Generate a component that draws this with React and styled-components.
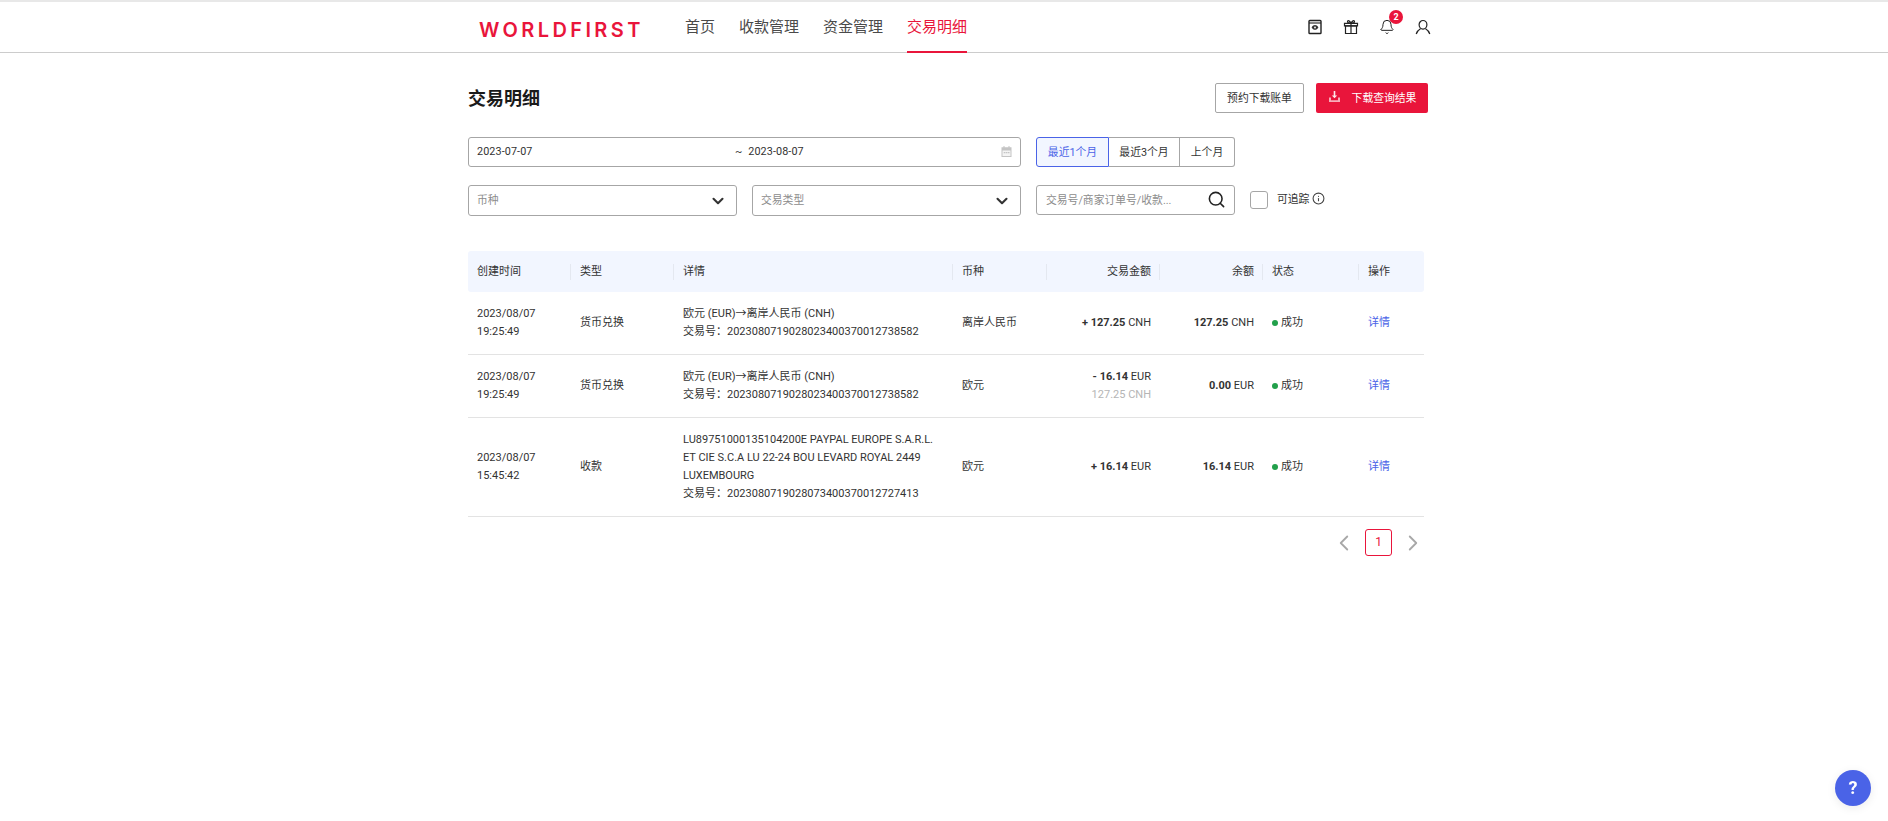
import React from "react";
import styled, { createGlobalStyle } from "styled-components";
import { ChevronDown, ChevronLeft, ChevronRight, Search, Info, Bell } from "lucide-react";

const FONT = `Roboto, "Noto Sans CJK SC", sans-serif`;

const Global = createGlobalStyle`
  html, body { margin: 0; padding: 0; background: #fff; }
  body { font-family: ${FONT}; font-size: 10.8px; color: #333; min-height: 821px; }
`;

const Header = styled.header`
  height: 50px;
  border-top: 2px solid #e8e8e8;
  border-bottom: 1px solid #ccc;
  display: flex;
  align-items: stretch;
  padding: 0 457px 0 479px;
`;
const Logo = styled.div`
  width: 163px;
  align-self: center;
  padding-top: 5px;
  font-family: Inter, "Liberation Sans", sans-serif;
  font-weight: 600;
  font-size: 20px;
  letter-spacing: 3.4px;
  color: #e9153b;
  line-height: 20px;
  white-space: nowrap;
`;
const Nav = styled.nav`
  display: flex;
  gap: 24px;
  margin-left: 43px;
`;
const NavItem = styled.a`
  font-size: 15px;
  line-height: 50px;
  color: ${(p) => (p.$active ? "#e9153b" : "#4a4a4a")};
  border-bottom: 2px solid ${(p) => (p.$active ? "#e9153b" : "transparent")};
  box-sizing: border-box;
  height: 51px;
  margin-bottom: -1px;
`;
const Tools = styled.div`
  margin-left: auto;
  display: flex;
  align-items: center;
  gap: 20px;
  color: #222;
`;
const ToolIcon = styled.span`
  position: relative;
  display: flex;
  width: 16px;
  height: 16px;
`;
const Badge = styled.span`
  position: absolute;
  top: -9px;
  left: 10px;
  width: 14px;
  height: 14px;
  border-radius: 50%;
  background: #e9153b;
  color: #fff;
  font-size: 9px;
  font-weight: 700;
  line-height: 14px;
  text-align: center;
`;

const Main = styled.main`
  padding: 0 460px 0 468px;
`;
const TitleRow = styled.div`
  display: flex;
  align-items: center;
  justify-content: space-between;
  height: 30px;
  margin-top: 30px;
`;
const Title = styled.h1`
  margin: 0 0 2px;
  font-size: 18px;
  font-weight: 700;
  color: #1a1a1a;
`;
const Actions = styled.div`
  display: flex;
  gap: 12px;
`;
const OutlineButton = styled.button`
  width: 89px;
  height: 30px;
  padding: 0 0 3px;
  font: inherit;
  color: #333;
  background: #fff;
  border: 1px solid #a6a6a6;
  border-radius: 2px;
`;
const PrimaryButton = styled.button`
  width: 112px;
  height: 30px;
  padding: 0 0 3px;
  font: inherit;
  color: #fff;
  background: #e9153b;
  border: 0;
  border-radius: 2px;
  display: flex;
  align-items: center;
  justify-content: center;
  gap: 11px;
`;
const FilterRow = styled.div`
  display: flex;
  align-items: flex-start;
  gap: 15px;
  margin-top: ${(p) => p.$top}px;
`;
const DateRange = styled.div`
  box-sizing: border-box;
  width: 553px;
  height: 30px;
  display: flex;
  align-items: center;
  padding: 0 8px 2px 8px;
  border: 1px solid #a6a6a6;
  border-radius: 3px;
  color: #333;
  letter-spacing: 0.1px;
`;
const DateStart = styled.span`
  width: 258px;
`;
const DateEnd = styled.span`
  flex: 1;
  word-spacing: 3px;
`;
const Segments = styled.div`
  display: flex;
  width: 199px;
  height: 30px;
`;
const Segment = styled.button`
  box-sizing: border-box;
  width: ${(p) => p.$w}px;
  height: 30px;
  padding: 0 0 2px;
  font: inherit;
  color: ${(p) => (p.$active ? "#4a63e7" : "#333")};
  background: ${(p) => (p.$active ? "#f2f6ff" : "#fff")};
  border: 1px solid ${(p) => (p.$active ? "#4a63e7" : "#a6a6a6")};
  border-left-width: ${(p) => (p.$first ? 1 : 0)}px;
  border-radius: ${(p) => (p.$first ? "3px 0 0 3px" : p.$last ? "0 3px 3px 0" : "0")};
`;
const Select = styled.div`
  box-sizing: border-box;
  width: 269px;
  height: 31px;
  display: flex;
  align-items: center;
  justify-content: space-between;
  padding: 0 9px 3px 8px;
  border: 1px solid #a6a6a6;
  border-radius: 3px;
  color: #8c8c8c;
  svg { margin-top: 3px; }
`;
const SearchBox = styled.div`
  box-sizing: border-box;
  width: 199px;
  height: 30px;
  display: flex;
  align-items: center;
  justify-content: space-between;
  padding: 0 8px 3px 9px;
  border: 1px solid #a6a6a6;
  border-radius: 3px;
  color: #8c8c8c;
  svg { margin-top: 1px; }
`;
const CheckWrap = styled.label`
  display: flex;
  align-items: center;
  height: 26px;
  color: #333;
`;
const CheckBox = styled.span`
  box-sizing: border-box;
  width: 18px;
  height: 18px;
  border: 1px solid #a6a6a6;
  border-radius: 3px;
  margin-right: 9px;
  margin-top: 4px;
`;
const InfoMark = styled(Info)`
  margin-left: 3px;
  color: #444;
`;
const Table = styled.table`
  width: 956px;
  margin-top: 35px;
  border-collapse: collapse;
  table-layout: fixed;
  font-size: 11px;
  line-height: 18px;
`;
const Th = styled.th`
  position: relative;
  height: 41px;
  padding: 0 9px;
  background: #f2f6ff;
  font-weight: 400;
  color: #333;
  text-align: ${(p) => p.$align || "left"};
  &:first-child { border-radius: 3px 0 0 3px; }
  &:last-child { border-radius: 0 3px 3px 0; }
  &:not(:last-child)::after {
    content: "";
    position: absolute;
    right: 0;
    top: 13px;
    width: 1px;
    height: 16px;
    background: #e4e8f0;
  }
`;
const Td = styled.td`
  padding: 13px 9px;
  border-bottom: 1px solid #e3e3e3;
  color: #333;
  text-align: ${(p) => p.$align || "left"};
  vertical-align: middle;
  overflow-wrap: break-word;
`;
const Amount = styled.b`
  font-weight: 700;
`;
const Faded = styled.div`
  color: #b5b5b5;
`;
const Dot = styled.span`
  display: inline-block;
  width: 6px;
  height: 6px;
  border-radius: 50%;
  background: #22a04b;
  margin-right: 3px;
  vertical-align: 0;
`;
const LinkText = styled.a`
  color: #4a63e7;
`;
const Pager = styled.div`
  display: flex;
  justify-content: flex-end;
  align-items: center;
  width: 958px;
  margin-top: 12px;
  color: #a8a8a8;
`;
const PageNum = styled.span`
  box-sizing: border-box;
  width: 27px;
  height: 27px;
  margin: 0 8px;
  border: 1px solid #e9153b;
  border-radius: 3px;
  color: #e9153b;
  font-size: 12px;
  line-height: 25px;
  text-align: center;
`;
const Help = styled.div`
  position: fixed;
  left: 1835px;
  top: 770px;
  width: 36px;
  height: 36px;
  border-radius: 50%;
  background: #4a63e7;
  color: #fff;
  font-size: 18px;
  font-weight: 700;
  line-height: 36px;
  text-align: center;
  box-shadow: 0 2px 10px rgba(0, 0, 0, 0.08);
`;

const ScanIcon = () => (
  <svg width="16" height="16" viewBox="0 0 16 16" fill="none" stroke="#222" strokeWidth="1.4">
    <rect x="2" y="1.500" width="12" height="13" rx="0.8" />
    <path d="M2 4h12" strokeWidth="1.1" />
    <path d="M4.600 8.500c1-1.700 2.100-2.400 3.400-2.400s2.400.7 3.400 2.400c-1 1.700-2.100 2.300-3.400 2.300s-2.400-.6-3.400-2.300z" fill="#333" stroke="none" />
    <circle cx="8" cy="8.500" r="0.9" fill="#fff" stroke="none" />
  </svg>
);
const GiftIcon = () => (
  <svg width="16" height="16" viewBox="0 0 16 16" fill="none" stroke="#222" strokeWidth="1.2">
    <path d="M2.500 6.800h11v7.700h-11z" />
    <path d="M1.500 4.300h13v2.500h-13z" />
    <path d="M8 4.300v10.200" />
    <path d="M8 4.300C6.800 1.800 4.800 1 4.500 2.300S6 4.300 8 4.300c1.200-2.500 3.200-3.300 3.500-2S10 4.300 8 4.300z" />
  </svg>
);
const UserIcon = () => (
  <svg width="16" height="16" viewBox="0 0 16 16" fill="none" stroke="#222" strokeWidth="1.2">
    <ellipse cx="8" cy="5.800" rx="3.900" ry="4.300" />
    <path d="M1.200 15c.6-2.500 2-4 4.300-5.300" />
    <path d="M14.800 15c-.6-2.500-2-4-4.300-5.300" />
  </svg>
);
const DownloadIcon = () => (
  <svg width="13" height="13" viewBox="0 0 13 13">
    <path d="M5.700 1h1.600v4.400h1.900L6.500 8.300 3.800 5.400h1.900z" fill="#fff" fillOpacity="0.9" />
    <path d="M1 7.500h2v2.800h7V7.500h2V12H1z" fill="#fff" fillOpacity="0.65" />
  </svg>
);
const CalendarIcon = () => (
  <svg width="11" height="11" viewBox="0 0 11 11">
    <path d="M2.500 0h1v1.200h4V0h1v1.200h2V11H.5V1.200h2z" fill="#c4c4c4" />
    <path d="M1.500 4.500h8v5.500h-8z" fill="#f4f4f4" />
    <path d="M2.700 6h1.600v1.200H2.700zM4.800 6h1.600v1.200H4.800zM6.900 6h1.600v1.200H6.900z" fill="#c4c4c4" />
  </svg>
);

const rows = [
  { date: "2023/08/07", time: "19:25:49", type: "货币兑换", lines: ["欧元 (EUR)→离岸人民币 (CNH)"], no: "2023080719028023400370012738582", cur: "离岸人民币", sign: "+ 127.25", unit: "CNH", bal: "127.25", balUnit: "CNH" },
  { date: "2023/08/07", time: "19:25:49", type: "货币兑换", lines: ["欧元 (EUR)→离岸人民币 (CNH)"], no: "2023080719028023400370012738582", cur: "欧元", sign: "- 16.14", unit: "EUR", sub: "127.25 CNH", bal: "0.00", balUnit: "EUR" },
  { date: "2023/08/07", time: "15:45:42", type: "收款", lines: ["LU89751000135104200E PAYPAL EUROPE S.A.R.L.", "ET CIE S.C.A LU 22-24 BOU LEVARD ROYAL 2449", "LUXEMBOURG"], no: "2023080719028073400370012727413", cur: "欧元", sign: "+ 16.14", unit: "EUR", bal: "16.14", balUnit: "EUR" },
];

export default function App() {
  return (
    <>
      <Global />
      <Header>
        <Logo>WORLDFIRST</Logo>
        <Nav>
          <NavItem>首页</NavItem>
          <NavItem>收款管理</NavItem>
          <NavItem>资金管理</NavItem>
          <NavItem $active>交易明细</NavItem>
        </Nav>
        <Tools>
          <ToolIcon><ScanIcon /></ToolIcon>
          <ToolIcon><GiftIcon /></ToolIcon>
          <ToolIcon><Bell size={16} strokeWidth={1.5} /><Badge>2</Badge></ToolIcon>
          <ToolIcon><UserIcon /></ToolIcon>
        </Tools>
      </Header>
      <Main>
        <TitleRow>
          <Title>交易明细</Title>
          <Actions>
            <OutlineButton>预约下载账单</OutlineButton>
            <PrimaryButton><DownloadIcon />下载查询结果</PrimaryButton>
          </Actions>
        </TitleRow>
        <FilterRow $top={24}>
          <DateRange>
            <DateStart>2023-07-07</DateStart>
            <DateEnd>~ 2023-08-07</DateEnd>
            <CalendarIcon />
          </DateRange>
          <Segments>
            <Segment $w={73} $active $first>最近1个月</Segment>
            <Segment $w={71}>最近3个月</Segment>
            <Segment $w={55} $last>上个月</Segment>
          </Segments>
        </FilterRow>
        <FilterRow $top={18}>
          <Select>币种<ChevronDown size={18} color="#333" strokeWidth={2.8} /></Select>
          <Select>交易类型<ChevronDown size={18} color="#333" strokeWidth={2.8} /></Select>
          <SearchBox>交易号/商家订单号/收款...<Search size={19} color="#222" strokeWidth={2} /></SearchBox>
          <CheckWrap>
            <CheckBox />可追踪<InfoMark size={13} />
          </CheckWrap>
        </FilterRow>
        <Table>
          <colgroup>
            <col width="103" /><col width="103" /><col width="279" /><col width="94" />
            <col width="113" /><col width="103" /><col width="96" /><col width="65" />
          </colgroup>
          <thead>
            <tr>
              <Th>创建时间</Th><Th>类型</Th><Th>详情</Th><Th>币种</Th>
              <Th $align="right">交易金额</Th><Th $align="right">余额</Th><Th>状态</Th><Th>操作</Th>
            </tr>
          </thead>
          <tbody>
            {rows.map((r, i) => (
              <tr key={i}>
                <Td>{r.date}<br />{r.time}</Td>
                <Td>{r.type}</Td>
                <Td>
                  {r.lines.map((l) => <div key={l}>{l}</div>)}
                  <div>交易号：{r.no}</div>
                </Td>
                <Td>{r.cur}</Td>
                <Td $align="right">
                  <div><Amount>{r.sign}</Amount> {r.unit}</div>
                  {r.sub && <Faded>{r.sub}</Faded>}
                </Td>
                <Td $align="right"><Amount>{r.bal}</Amount> {r.balUnit}</Td>
                <Td><Dot />成功</Td>
                <Td><LinkText>详情</LinkText></Td>
              </tr>
            ))}
          </tbody>
        </Table>
        <Pager>
          <ChevronLeft size={26} strokeWidth={1.7} />
          <PageNum>1</PageNum>
          <ChevronRight size={26} strokeWidth={1.7} />
        </Pager>
      </Main>
      <Help>?</Help>
    </>
  );
}
